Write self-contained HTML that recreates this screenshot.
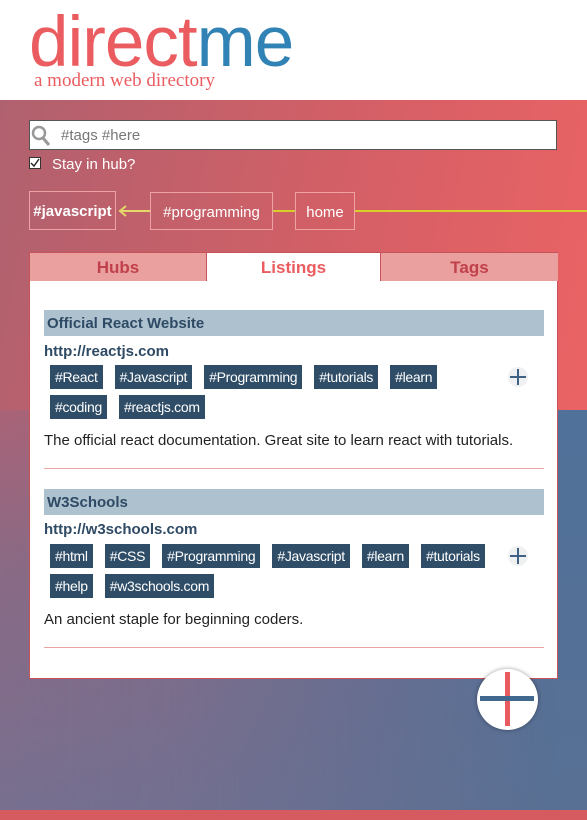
<!DOCTYPE html>
<html><head><meta charset="utf-8"><style>
*{margin:0;padding:0;box-sizing:border-box}
body{width:587px;height:820px;overflow:hidden;position:relative;font-family:"Liberation Sans",sans-serif;background:#fff}
.abs{position:absolute}
#top{left:0;top:100px;width:587px;height:310px;background:linear-gradient(100deg,#b0616f 0%,#d35f66 55%,#ea6364 100%)}
#bot{left:0;top:410px;width:587px;height:400px;background:linear-gradient(180deg,#50719a 0%,#587094 100%)}
#botl{left:0;top:410px;width:587px;height:400px;background:linear-gradient(180deg,#aa6377 0%,#8a6a85 40%,#776f8f 100%);-webkit-mask-image:linear-gradient(90deg,#000 0%,rgba(0,0,0,.85) 30%,rgba(0,0,0,0) 95%);mask-image:linear-gradient(90deg,#000 0%,rgba(0,0,0,.85) 30%,rgba(0,0,0,0) 95%)}
#strip{left:0;top:810px;width:587px;height:10px;background:#d65b61}
.logo{left:29px;top:2px;font-size:71px;color:#ea5c5f;letter-spacing:-1px}
.logo span{color:#3283b5}
.tag1{left:34px;top:70px;font-family:"Liberation Serif",serif;font-size:19px;color:#ea5c5f}
#search{left:29px;top:120px;width:528px;height:30px;background:#fff;border:1px solid #555}
#search .ph{position:absolute;left:31px;top:6px;font-size:15px;color:#777}
#cb{left:29px;top:157px;width:12px;height:12px;background:#fff;border:1px solid #333}
.lbl{left:52px;top:156px;color:#fff;font-size:15px}
.bc{border:1px solid #eda3a3;color:#fff;font-size:15px;text-align:center;line-height:40px}
.yl{background:#d6cf2a;height:2px;top:210px}
#panel{left:29px;top:252px;width:529px;height:427px;background:#fff;border:1px solid #c75257}
.tab{position:absolute;top:0;height:28px;text-align:center;font-size:17px;font-weight:bold;line-height:30px}
.h{position:absolute;left:14px;width:500px;height:26px;background:#adc1ce;color:#2e4a64;font-weight:bold;font-size:15px;line-height:27px;padding-left:3px}
.url{position:absolute;left:14px;color:#2e4a64;font-weight:bold;font-size:15px}
.tags{position:absolute;left:20px;display:flex;flex-wrap:wrap;gap:6px 12px}
.t{background:#2f4d67;color:#fff;font-size:14px;height:24px;line-height:25px;padding:0 5px;letter-spacing:-.3px}
.d{position:absolute;left:14px;font-size:15px;color:#222}
.hr{position:absolute;left:14px;width:500px;height:1px;background:#eba3a3}
.plus{position:absolute;width:20px;height:20px;border-radius:50%;background:#eef0f2}
.plus:before{content:"";position:absolute;left:2px;top:9px;width:16px;height:2px;background:#3f6184}
.plus:after{content:"";position:absolute;left:9px;top:2px;width:2px;height:16px;background:#3f6184}
#fab{left:477px;top:669px;width:61px;height:61px;border-radius:50%;background:#fff;box-shadow:0 0 4px rgba(0,0,0,.4)}
</style></head><body>
<div class="abs logo">direct<span>me</span></div>
<div class="abs tag1">a modern web directory</div>
<div class="abs" id="top"></div>
<div class="abs" id="bot"></div>
<div class="abs" id="botl"></div>
<div class="abs" id="strip"></div>
<div class="abs" id="search">
<svg style="position:absolute;left:1px;top:4px" width="20" height="22" viewBox="0 0 20 22"><circle cx="8" cy="8" r="6" fill="none" stroke="#999" stroke-width="2.5"/><path d="M12 13l6 7" stroke="#999" stroke-width="3"/></svg>
<div class="ph">#tags #here</div></div>
<div class="abs" id="cb"><svg width="10" height="10" viewBox="0 0 10 10" style="position:absolute;left:0;top:0"><path d="M1 5l3 3 5-7" fill="none" stroke="#222" stroke-width="1.4"/></svg></div>
<div class="abs lbl">Stay in hub?</div>
<div class="abs bc" style="left:29px;top:191px;width:87px;height:39px;font-weight:bold">#javascript</div>
<svg class="abs" style="left:118px;top:204px" width="33" height="14"><path d="M2 7h31M8 2L2 7l6 5" fill="none" stroke="#e4d86a" stroke-width="2"/></svg>
<div class="abs bc" style="left:150px;top:192px;width:123px;height:38px">#programming</div>
<div class="abs yl" style="left:273px;width:22px"></div>
<div class="abs bc" style="left:295px;top:192px;width:60px;height:38px">home</div>
<div class="abs yl" style="left:355px;width:232px"></div>
<div class="abs" id="panel">
<div class="tab" style="left:0;width:176px;background:#e9a09e;color:#c0414b">Hubs</div>
<div class="tab" style="left:176px;width:175px;background:#fff;color:#ea5c5f;border-left:1px solid #c75257;border-right:1px solid #c75257">Listings</div>
<div class="tab" style="left:351px;width:177px;background:#e9a09e;color:#c0414b">Tags</div>
<div class="h" style="top:57px">Official React Website</div>
<div class="url" style="top:90px">http://reactjs.com</div>
<div class="tags" style="top:112px;width:420px"><span class="t">#React</span><span class="t">#Javascript</span><span class="t">#Programming</span><span class="t">#tutorials</span><span class="t">#learn</span><span class="t">#coding</span><span class="t">#reactjs.com</span></div>
<div class="plus" style="left:478px;top:114px"></div>
<div class="d" style="top:179px">The official react documentation. Great site to learn react with tutorials.</div>
<div class="hr" style="top:215px"></div>
<div class="h" style="top:236px">W3Schools</div>
<div class="url" style="top:268px">http://w3schools.com</div>
<div class="tags" style="top:291px;width:470px"><span class="t">#html</span><span class="t">#CSS</span><span class="t">#Programming</span><span class="t">#Javascript</span><span class="t">#learn</span><span class="t">#tutorials</span><span class="t">#help</span><span class="t">#w3schools.com</span></div>
<div class="plus" style="left:478px;top:293px"></div>
<div class="d" style="top:358px">An ancient staple for beginning coders.</div>
<div class="hr" style="top:394px"></div>
</div>
<div class="abs" id="fab">
<div style="position:absolute;left:28px;top:3px;width:5px;height:54px;background:#e85b5e"></div>
<div style="position:absolute;left:3px;top:27px;width:54px;height:5px;background:#41688f"></div>
</div>
</body></html>
